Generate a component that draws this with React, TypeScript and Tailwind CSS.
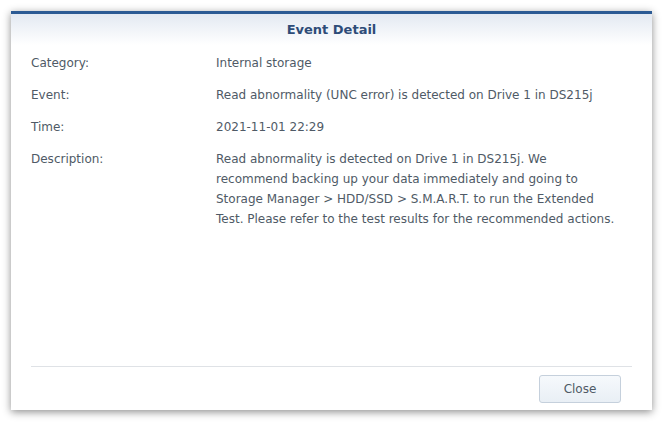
export default function App() {
  const rows: [string, string][] = [
    ["Category:", "Internal storage"],
    ["Event:", "Read abnormality (UNC error) is detected on Drive 1 in DS215j"],
    ["Time:", "2021-11-01 22:29"],
  ];
  return (
    <div className="w-[665px] h-[425px] bg-white pt-[11px] pl-[11px]" style={{ fontFamily: '"DejaVu Sans", Verdana, sans-serif' }}>
      <div className="w-[641px] h-[399px] flex flex-col border-t-[3px] border-[#2b5a94] bg-white shadow-[0_2px_8px_rgba(0,0,0,0.45)]">
        <div className="h-[31px] flex items-center justify-center bg-gradient-to-b from-[#e3e9f2] to-white">
          <span className="text-[13px] font-bold text-[#2e4c78]">Event Detail</span>
        </div>
        <div className="flex-1 px-[20px] pt-[8px] text-[12px] text-[#4f5a66]">
          {rows.map(([k, v]) => (
            <div key={k} className="flex h-[32px] items-start leading-[20px]">
              <div className="w-[185px] shrink-0">{k}</div>
              <div>{v}</div>
            </div>
          ))}
          <div className="flex leading-[20px]">
            <div className="w-[185px] shrink-0">Description:</div>
            <div className="w-[403px]">
              Read abnormality is detected on Drive 1 in DS215j. We recommend backing up your data immediately and going to Storage Manager &gt; HDD/SSD &gt; S.M.A.R.T. to run the Extended Test. Please refer to the test results for the recommended actions.
            </div>
          </div>
        </div>
        <div className="mx-[20px] border-t border-[#dfe2e6]" />
        <div className="h-[43px] flex items-center justify-end pr-[31px] pt-[1px]">
          <button className="w-[82px] h-[28px] rounded-[3px] border border-[#c5d0dc] bg-gradient-to-b from-[#f6f9fc] to-[#e9eff5] text-[12px] text-[#4f5a66]">
            Close
          </button>
        </div>
      </div>
    </div>
  );
}
